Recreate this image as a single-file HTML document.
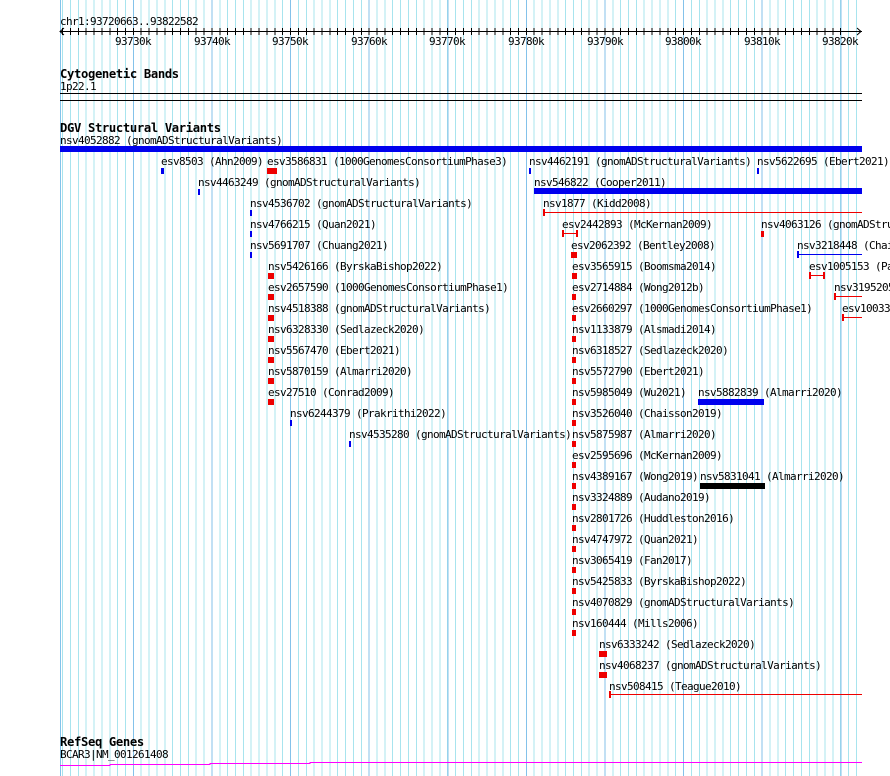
<!DOCTYPE html>
<html><head><meta charset="utf-8"><style>
html,body{margin:0;padding:0;background:#fff;width:890px;height:776px;overflow:hidden}
svg{display:block}
text{font-family:"DejaVu Sans Mono","Liberation Mono",monospace;font-size:11px;letter-spacing:-0.62px;fill:#000}
.b{font-weight:bold;font-size:12.2px;letter-spacing:-0.35px}
</style></head><body>
<svg width="890" height="776" xmlns="http://www.w3.org/2000/svg">
<path shape-rendering="crispEdges" stroke="#a8e4ee" stroke-width="1" fill="none" d="M62.6 0
v776m7.86-776v776m7.86-776v776m7.86-776v776m7.86-776v776m7.86-776v776m7.86-776v776m7.86-776v776m7.86-776v776m7.86-776v776m7.86-776
v776m7.86-776v776m7.86-776v776m7.86-776v776m7.86-776v776m7.86-776v776m7.86-776v776m7.86-776v776m7.86-776v776m7.86-776v776m7.86-776
v776m7.86-776v776m7.86-776v776m7.86-776v776m7.86-776v776m7.86-776v776m7.86-776v776m7.86-776v776m7.86-776v776m7.86-776v776m7.86-776
v776m7.86-776v776m7.86-776v776m7.86-776v776m7.86-776v776m7.86-776v776m7.86-776v776m7.86-776v776m7.86-776v776m7.86-776v776m7.86-776
v776m7.86-776v776m7.86-776v776m7.86-776v776m7.86-776v776m7.86-776v776m7.86-776v776m7.86-776v776m7.86-776v776m7.86-776v776m7.86-776
v776m7.86-776v776m7.86-776v776m7.86-776v776m7.86-776v776m7.86-776v776m7.86-776v776m7.86-776v776m7.86-776v776m7.86-776v776m7.86-776
v776m7.86-776v776m7.86-776v776m7.86-776v776m7.86-776v776m7.86-776v776m7.86-776v776m7.86-776v776m7.86-776v776m7.86-776v776m7.86-776
v776m7.86-776v776m7.86-776v776m7.86-776v776m7.86-776v776m7.86-776v776m7.86-776v776m7.86-776v776m7.86-776v776m7.86-776v776m7.86-776
v776m7.86-776v776m7.86-776v776m7.86-776v776m7.86-776v776m7.86-776v776m7.86-776v776m7.86-776v776m7.86-776v776m7.86-776v776m7.86-776
v776m7.86-776v776m7.86-776v776m7.86-776v776m7.86-776v776m7.86-776v776m7.86-776v776m7.86-776v776m7.86-776v776m7.86-776v776m7.86-776
v776m7.86-776v776"/>
<path shape-rendering="crispEdges" stroke="#84c2ea" stroke-width="1" fill="none" d="M60.5 0v776M133.4 0
v776m78.6-776v776m78.6-776v776m78.6-776v776m78.6-776v776m78.6-776v776m78.6-776v776m78.6-776v776m78.6-776v776m78.6-776v776"/>
<text x="60" y="25">chr1:93720663..93822582</text>
<rect x="60" y="31" width="802" height="1" fill="#000"/>
<path shape-rendering="crispEdges" stroke="#000" stroke-width="1" fill="none" d="M62.6 28
v7m7.86-7v7m7.86-7v7m7.86-7v7m7.86-7v7m7.86-7v7m7.86-7v7m7.86-7v7m7.86-7v7m7.86-7v7m7.86-7
v7m7.86-7v7m7.86-7v7m7.86-7v7m7.86-7v7m7.86-7v7m7.86-7v7m7.86-7v7m7.86-7v7m7.86-7v7m7.86-7
v7m7.86-7v7m7.86-7v7m7.86-7v7m7.86-7v7m7.86-7v7m7.86-7v7m7.86-7v7m7.86-7v7m7.86-7v7m7.86-7
v7m7.86-7v7m7.86-7v7m7.86-7v7m7.86-7v7m7.86-7v7m7.86-7v7m7.86-7v7m7.86-7v7m7.86-7v7m7.86-7
v7m7.86-7v7m7.86-7v7m7.86-7v7m7.86-7v7m7.86-7v7m7.86-7v7m7.86-7v7m7.86-7v7m7.86-7v7m7.86-7
v7m7.86-7v7m7.86-7v7m7.86-7v7m7.86-7v7m7.86-7v7m7.86-7v7m7.86-7v7m7.86-7v7m7.86-7v7m7.86-7
v7m7.86-7v7m7.86-7v7m7.86-7v7m7.86-7v7m7.86-7v7m7.86-7v7m7.86-7v7m7.86-7v7m7.86-7v7m7.86-7
v7m7.86-7v7m7.86-7v7m7.86-7v7m7.86-7v7m7.86-7v7m7.86-7v7m7.86-7v7m7.86-7v7m7.86-7v7m7.86-7
v7m7.86-7v7m7.86-7v7m7.86-7v7m7.86-7v7m7.86-7v7m7.86-7v7m7.86-7v7m7.86-7v7m7.86-7v7m7.86-7
v7m7.86-7v7m7.86-7v7m7.86-7v7m7.86-7v7m7.86-7v7m7.86-7v7m7.86-7v7m7.86-7v7m7.86-7v7m7.86-7"/>
<path d="M64 28 L60 31.5 L64 35" stroke="#000" fill="none"/>
<path d="M857 28 L861 31.5 L857 35" stroke="#000" fill="none"/>
<g text-anchor="middle">
<text x="133" y="45">93730k</text><text x="212" y="45">93740k</text><text x="290" y="45">93750k</text>
<text x="369" y="45">93760k</text><text x="447" y="45">93770k</text><text x="526" y="45">93780k</text>
<text x="605" y="45">93790k</text><text x="683" y="45">93800k</text><text x="762" y="45">93810k</text>
<text x="840" y="45">93820k</text>
</g>
<text class="b" x="60" y="78">Cytogenetic Bands</text>
<text x="60" y="90">1p22.1</text>
<rect x="60" y="93" width="802" height="1" fill="#000"/>
<rect x="60" y="100" width="802" height="1" fill="#000"/>
<text class="b" x="60" y="132">DGV Structural Variants</text>
<text x="60" y="144">nsv4052882 (gnomADStructuralVariants)</text>
<rect x="60" y="146" width="802" height="6" fill="#0000ee"/>

<text x="161" y="165">esv8503 (Ahn2009)</text><rect x="161" y="168" width="3" height="6" fill="#0000ee"/>
<text x="267" y="165">esv3586831 (1000GenomesConsortiumPhase3)</text><rect x="267" y="168" width="10" height="6" fill="#ee0000"/>
<text x="529" y="165">nsv4462191 (gnomADStructuralVariants)</text><rect x="529" y="168" width="2" height="6" fill="#0000ee"/>
<text x="757" y="165">nsv5622695 (Ebert2021)</text><rect x="757" y="168" width="2" height="6" fill="#0000ee"/>

<text x="198" y="186">nsv4463249 (gnomADStructuralVariants)</text><rect x="198" y="189" width="2" height="6" fill="#0000ee"/>
<text x="534" y="186">nsv546822 (Cooper2011)</text><rect x="534" y="188" width="328" height="6" fill="#0000ee"/>

<text x="250" y="207">nsv4536702 (gnomADStructuralVariants)</text><rect x="250" y="210" width="2" height="6" fill="#0000ee"/>
<text x="543" y="207">nsv1877 (Kidd2008)</text><rect x="543" y="212" width="319" height="1" fill="#ee0000"/><rect x="543" y="209" width="2" height="7" fill="#ee0000"/>

<text x="250" y="228">nsv4766215 (Quan2021)</text><rect x="250" y="231" width="2" height="6" fill="#0000ee"/>
<text x="562" y="228">esv2442893 (McKernan2009)</text><rect x="562" y="233" width="15" height="1" fill="#ee0000"/><rect x="562" y="230" width="2" height="7" fill="#ee0000"/><rect x="576" y="230" width="2" height="7" fill="#ee0000"/>
<text x="761" y="228">nsv4063126 (gnomADStructuralVariants)</text><rect x="761" y="231" width="3" height="6" fill="#ee0000"/>

<text x="250" y="249">nsv5691707 (Chuang2021)</text><rect x="250" y="252" width="2" height="6" fill="#0000ee"/>
<text x="571" y="249">esv2062392 (Bentley2008)</text><rect x="571" y="252" width="6" height="6" fill="#ee0000"/>
<text x="797" y="249">nsv3218448 (Chaisson2019)</text><rect x="797" y="254" width="65" height="1" fill="#0000ee"/><rect x="797" y="251" width="2" height="7" fill="#0000ee"/>

<text x="268" y="270">nsv5426166 (ByrskaBishop2022)</text><rect x="268" y="273" width="6" height="6" fill="#ee0000"/>
<text x="572" y="270">esv3565915 (Boomsma2014)</text><rect x="572" y="273" width="5" height="6" fill="#ee0000"/>
<text x="809" y="270">esv1005153 (Park2010)</text><rect x="809" y="275" width="15" height="1" fill="#ee0000"/><rect x="809" y="272" width="2" height="7" fill="#ee0000"/><rect x="823" y="272" width="2" height="7" fill="#ee0000"/>

<text x="268" y="291">esv2657590 (1000GenomesConsortiumPhase1)</text><rect x="268" y="294" width="6" height="6" fill="#ee0000"/>
<text x="572" y="291">esv2714884 (Wong2012b)</text><rect x="572" y="294" width="4" height="6" fill="#ee0000"/>
<text x="834" y="291">nsv3195205</text><rect x="834" y="296" width="28" height="1" fill="#ee0000"/><rect x="834" y="293" width="2" height="7" fill="#ee0000"/>

<text x="268" y="312">nsv4518388 (gnomADStructuralVariants)</text><rect x="268" y="315" width="6" height="6" fill="#ee0000"/>
<text x="572" y="312">esv2660297 (1000GenomesConsortiumPhase1)</text><rect x="572" y="315" width="4" height="6" fill="#ee0000"/>
<text x="842" y="312">esv10033</text><rect x="842" y="317" width="20" height="1" fill="#ee0000"/><rect x="842" y="314" width="2" height="7" fill="#ee0000"/>

<text x="268" y="333">nsv6328330 (Sedlazeck2020)</text><rect x="268" y="336" width="6" height="6" fill="#ee0000"/>
<text x="572" y="333">nsv1133879 (Alsmadi2014)</text><rect x="572" y="336" width="4" height="6" fill="#ee0000"/>
<text x="268" y="354">nsv5567470 (Ebert2021)</text><rect x="268" y="357" width="6" height="6" fill="#ee0000"/>
<text x="572" y="354">nsv6318527 (Sedlazeck2020)</text><rect x="572" y="357" width="4" height="6" fill="#ee0000"/>
<text x="268" y="375">nsv5870159 (Almarri2020)</text><rect x="268" y="378" width="6" height="6" fill="#ee0000"/>
<text x="572" y="375">nsv5572790 (Ebert2021)</text><rect x="572" y="378" width="4" height="6" fill="#ee0000"/>
<text x="268" y="396">esv27510 (Conrad2009)</text><rect x="268" y="399" width="6" height="6" fill="#ee0000"/>
<text x="572" y="396">nsv5985049 (Wu2021)</text><rect x="572" y="399" width="4" height="6" fill="#ee0000"/>
<text x="698" y="396">nsv5882839 (Almarri2020)</text><rect x="698" y="399" width="66" height="6" fill="#0000ee"/>
<text x="290" y="417">nsv6244379 (Prakrithi2022)</text><rect x="290" y="420" width="2" height="6" fill="#0000ee"/>
<text x="572" y="417">nsv3526040 (Chaisson2019)</text><rect x="572" y="420" width="4" height="6" fill="#ee0000"/>
<text x="349" y="438">nsv4535280 (gnomADStructuralVariants)</text><rect x="349" y="441" width="2" height="6" fill="#0000ee"/>
<text x="572" y="438">nsv5875987 (Almarri2020)</text><rect x="572" y="441" width="4" height="6" fill="#ee0000"/>
<text x="572" y="459">esv2595696 (McKernan2009)</text><rect x="572" y="462" width="4" height="6" fill="#ee0000"/>
<text x="572" y="480">nsv4389167 (Wong2019)</text><rect x="572" y="483" width="4" height="6" fill="#ee0000"/>
<text x="700" y="480">nsv5831041 (Almarri2020)</text><rect x="700" y="483" width="65" height="6" fill="#000"/>
<text x="572" y="501">nsv3324889 (Audano2019)</text><rect x="572" y="504" width="4" height="6" fill="#ee0000"/>
<text x="572" y="522">nsv2801726 (Huddleston2016)</text><rect x="572" y="525" width="4" height="6" fill="#ee0000"/>
<text x="572" y="543">nsv4747972 (Quan2021)</text><rect x="572" y="546" width="4" height="6" fill="#ee0000"/>
<text x="572" y="564">nsv3065419 (Fan2017)</text><rect x="572" y="567" width="4" height="6" fill="#ee0000"/>
<text x="572" y="585">nsv5425833 (ByrskaBishop2022)</text><rect x="572" y="588" width="4" height="6" fill="#ee0000"/>
<text x="572" y="606">nsv4070829 (gnomADStructuralVariants)</text><rect x="572" y="609" width="4" height="6" fill="#ee0000"/>
<text x="572" y="627">nsv160444 (Mills2006)</text><rect x="572" y="630" width="4" height="6" fill="#ee0000"/>
<text x="599" y="648">nsv6333242 (Sedlazeck2020)</text><rect x="599" y="651" width="8" height="6" fill="#ee0000"/>
<text x="599" y="669">nsv4068237 (gnomADStructuralVariants)</text><rect x="599" y="672" width="8" height="6" fill="#ee0000"/>
<text x="609" y="690">nsv508415 (Teague2010)</text><rect x="609" y="694" width="253" height="1" fill="#ee0000"/><rect x="609" y="691" width="2" height="7" fill="#ee0000"/>

<text class="b" x="60" y="746">RefSeq Genes</text>
<text x="60" y="758">BCAR3|NM_001261408</text>
<path shape-rendering="crispEdges" d="M60 765.5 H110 V764.5 H210 V763.5 H310 V762.5 H862" stroke="#ff00ff" fill="none"/>
</svg>
</body></html>
